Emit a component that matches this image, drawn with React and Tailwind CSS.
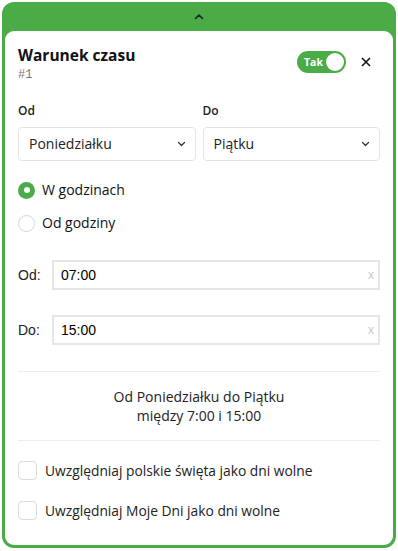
import React from "react";

const font = { fontFamily: '"Open Sans", "Noto Sans", sans-serif' };

function Chevron({ className }) {
  return (
    <svg className={className} viewBox="0 0 12 8" fill="none" stroke="currentColor" strokeWidth={1.6}>
      <path d="M2 2l4 4 4-4" strokeLinecap="round" strokeLinejoin="round" />
    </svg>
  );
}

function Select({ value }) {
  return (
    <div className="flex-1 h-[34px] rounded border border-[#e3e3e3] flex items-center justify-between pl-[10px] pr-[9px] text-[14px] leading-[18px] text-[#222]">
      <span>{value}</span>
      <Chevron className="w-[9px] h-[6px] text-[#333]" />
    </div>
  );
}

function TimeRow({ label, value }) {
  return (
    <div className="flex items-center">
      <span className="w-[34px] text-[14px] text-[#222] font-['Liberation_Sans',sans-serif]">{label}</span>
      <div className="flex-1 h-[30px] border-2 border-[#e6e6e6] flex items-center justify-between pl-[7px] pr-[4px] font-['Liberation_Sans',sans-serif]">
        <span className="text-[14px] text-black">{value}</span>
        <span className="text-[12px] text-[#c8c8c8] leading-none">x</span>
      </div>
    </div>
  );
}

function Checkbox({ label }) {
  return (
    <label className="flex items-center gap-[8px] h-[19px]">
      <span className="w-[19px] h-[19px] rounded-[4px] border border-[#dcdcdc] bg-white" />
      <span className="text-[13.8px] leading-[19px] text-[#222]">{label}</span>
    </label>
  );
}

function Radio({ checked, label }) {
  return (
    <div className="flex items-center gap-[7px] h-[18px]">
      {checked ? (
        <span className="w-[17px] h-[17px] rounded-full bg-[#4bab46] flex items-center justify-center">
          <span className="w-[6px] h-[6px] rounded-full bg-white" />
        </span>
      ) : (
        <span className="w-[17px] h-[17px] rounded-full border border-[#d5d5d5]" />
      )}
      <span className="text-[14px] leading-[18px] font-medium text-[#111]">{label}</span>
    </div>
  );
}

export default function App() {
  return (
    <div className="w-[398px] h-[551px] bg-white p-[2px]" style={font}>
      <div className="h-[546px] rounded-[12px] bg-[#4bab46] px-[3px] pb-[3px] flex flex-col">
        <div className="h-[29px] flex items-center justify-center">
          <svg className="w-[10px] h-[7px] text-[#222]" viewBox="0 0 10 7" fill="none" stroke="currentColor" strokeWidth={1.6}>
            <path d="M1.5 5.5L5 2l3.5 3.5" strokeLinecap="round" strokeLinejoin="round" />
          </svg>
        </div>
        <div className="flex-1 bg-white rounded-[9px] px-[13px] pt-[14px]">
          <div className="flex items-start justify-between">
            <div>
              <h1 className="text-[15.5px] font-bold text-[#111] leading-[20px]">Warunek czasu</h1>
              <p className="text-[12px] leading-[16px] text-[#777] font-['Liberation_Mono',monospace] mt-[2px]">#1</p>
            </div>
            <div className="flex items-center gap-[15px] mt-[6px] mr-[9px]">
              <div className="w-[49px] h-[22px] rounded-full bg-[#4bab46] flex items-center justify-between pl-[7px] pr-[2px]">
                <span className="text-[10.5px] leading-none font-bold text-white">Tak</span>
                <span className="w-[18px] h-[18px] rounded-full bg-white" />
              </div>
              <svg className="w-[10px] h-[10px] text-[#111]" viewBox="0 0 10 10" stroke="currentColor" strokeWidth={1.6}>
                <path d="M1 1l8 8M9 1l-8 8" />
              </svg>
            </div>
          </div>

          <div className="flex gap-[7px] mt-[20px]">
            <div className="flex-1">
              <p className="text-[12px] leading-[16px] font-semibold text-[#222] mb-[8px]">Od</p>
              <Select value="Poniedziałku" />
            </div>
            <div className="flex-1">
              <p className="text-[12px] leading-[16px] font-semibold text-[#222] mb-[8px]">Do</p>
              <Select value="Piątku" />
            </div>
          </div>

          <div className="mt-[20px] flex flex-col gap-[15px]">
            <Radio checked label="W godzinach" />
            <Radio label="Od godziny" />
          </div>

          <div className="mt-[28px] flex flex-col gap-[25px]">
            <TimeRow label="Od:" value="07:00" />
            <TimeRow label="Do:" value="15:00" />
          </div>

          <div className="mt-[26px] border-t border-[#eeeeee] pt-[15px] pb-[15px] text-center text-[14px] leading-[19px] text-[#222]">
            <p>Od Poniedziałku do Piątku</p>
            <p>między 7:00 i 15:00</p>
          </div>

          <div className="border-t border-[#eeeeee] pt-[20px] flex flex-col gap-[21px]">
            <Checkbox label="Uwzględniaj polskie święta jako dni wolne" />
            <Checkbox label="Uwzględniaj Moje Dni jako dni wolne" />
          </div>
        </div>
      </div>
    </div>
  );
}
